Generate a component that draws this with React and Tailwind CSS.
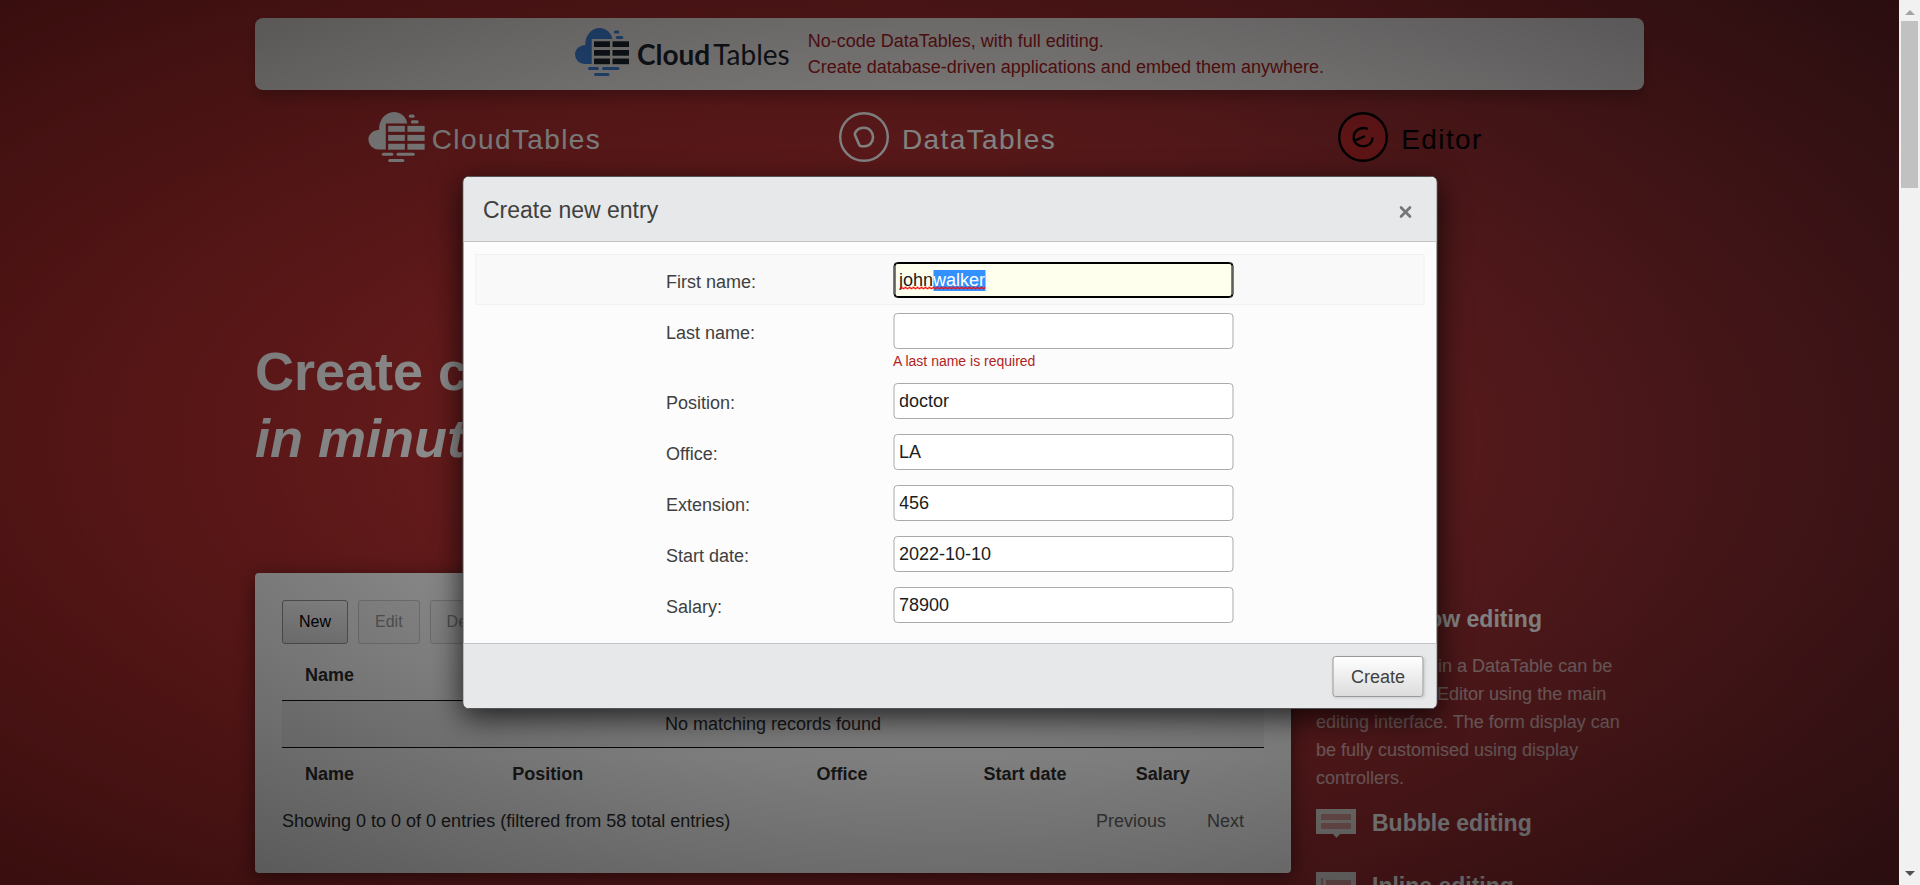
import { useEffect, useRef } from "react";

const COLUMNS = [
  { label: "Name", width: "w-[21.1%]" },
  { label: "Position", width: "w-[31%]" },
  { label: "Office", width: "w-[17%]" },
  { label: "Start date", width: "w-[15.5%]" },
  { label: "Salary", width: "w-[15.4%]" },
];

const FIELDS = [
  { id: "first-name", label: "First name:", value: "johnwalker", active: true },
  { id: "last-name", label: "Last name:", value: "", error: "A last name is required" },
  { id: "position", label: "Position:", value: "doctor" },
  { id: "office", label: "Office:", value: "LA" },
  { id: "extension", label: "Extension:", value: "456" },
  { id: "start-date", label: "Start date:", value: "2022-10-10" },
  { id: "salary", label: "Salary:", value: "78900" },
];

function CloudMark({ className, cloud, cell }) {
  return (
    <svg viewBox="0 0 54 48" className={className} aria-hidden="true">
      <g fill={cloud}>
        <path d="M16.700 36H9.500A9.500 9.500 0 0 1 0 26.500C0 21.500 4 17.600 10.300 17C10 8 16 0 24.500 0C31.500 0 36.500 5 37.300 11H16.700Z" />
        <rect x="38.800" y="2.500" width="5.600" height="3" rx="1.500" />
        <rect x="40.800" y="8" width="7.500" height="3" rx="1.500" />
        <rect x="13" y="39" width="11" height="3" rx="1.500" />
        <rect x="27" y="39" width="17.500" height="3" rx="1.500" />
        <rect x="19" y="45" width="15.500" height="3" rx="1.500" />
      </g>
      <g fill={cell}>
        <rect x="19" y="13.300" width="16" height="5.700" />
        <rect x="37.500" y="13.300" width="16.500" height="5.700" />
        <rect x="19" y="22" width="16" height="5.700" />
        <rect x="37.500" y="22" width="16.500" height="5.700" />
        <rect x="19" y="30.500" width="16" height="5.700" />
        <rect x="37.500" y="30.500" width="16.500" height="5.700" />
      </g>
    </svg>
  );
}

function Banner() {
  return (
    <a
      href="#cloudtables"
      className="flex h-[72px] items-center justify-center gap-[18px] rounded-lg bg-white/95 text-lg leading-[26px] text-[#a8201f] shadow-[0_8px_12px_rgba(0,0,0,0.2)]"
    >
      <span className="flex items-center gap-2">
        <CloudMark className="mb-1 h-12 w-[54px]" cloud="#4389e4" cell="#1b2631" />
        <span className="flex gap-[3px] font-[Lato,sans-serif] text-[28px] text-[#1b2631]">
          <b className="font-bold">Cloud</b>
          <span>Tables</span>
        </span>
      </span>
      <span>
        No-code DataTables, with full editing.
        <br />
        Create database-driven applications and embed them anywhere.
      </span>
    </a>
  );
}

function ProductNav() {
  const item = "flex items-center justify-center pr-1 text-[28px] tracking-wider";
  return (
    <nav className="mt-[22px] grid h-[50px] grid-cols-3">
      <a href="#cloud" className={item + " gap-[7px] text-white"}>
        <CloudMark className="h-[50px] w-[57px]" cloud="#fff" cell="#fff" />
        <span className="pt-[6px]">CloudTables</span>
      </a>
      <a href="#datatables" className={item + " gap-[13px] text-white"}>
        <svg viewBox="0 0 50 50" className="size-[50px]" fill="none" stroke="currentColor" aria-hidden="true">
          <circle cx="25" cy="25" r="23.800" strokeWidth="2.400" />
          <path d="M16.300 20.500C18 17.500 21 15.800 25 15.800C30.500 15.800 34 20 34 25C34 30.500 30.500 34.300 25.500 34.300H22.500Q20.800 34.300 20.200 32.800L16 23Q15.600 21.700 16.300 20.500Z" strokeWidth="2.600" />
        </svg>
        <span className="pt-[6px]">DataTables</span>
      </a>
      <a href="#editor" className={item + " gap-[13px] text-black"}>
        <svg viewBox="0 0 50 50" className="size-[50px]" fill="none" stroke="currentColor" aria-hidden="true">
          <circle cx="25" cy="25" r="23.800" strokeWidth="2.400" fill="#c42a2c" />
          <path d="M29 16.600C22 14.300 15.700 19 15.700 25.500C15.700 31 20 34.300 25 34.300C30.500 34.300 34.200 31 34.500 26.500M17 28.700L26 24.500" strokeWidth="2.400" strokeLinecap="round" />
        </svg>
        <span className="pt-[6px]">Editor</span>
      </a>
    </nav>
  );
}

function EntriesPanel() {
  const tool = "h-11 rounded-[3px] border px-4 text-base";
  return (
    <section className="h-[300px] min-w-0 flex-1 rounded bg-white px-[27px] pt-[27px] text-lg text-[#2c2c2c] shadow-[0_4px_20px_rgba(0,0,0,0.5)]">
      <div className="flex gap-[10px]">
        <button type="button" className={tool + " border-[#999] bg-linear-to-b from-white to-[#e4e4e4] text-black"}>New</button>
        <button type="button" disabled className={tool + " border-[#d0d0d0] bg-[#f9f9f9] text-[#999]"}>Edit</button>
        <button type="button" disabled className={tool + " border-[#d0d0d0] bg-[#f9f9f9] text-[#999]"}>Delete</button>
      </div>
      <table className="w-full table-fixed border-collapse text-left leading-6">
        <thead>
          <tr className="h-[56px] border-b border-[#111]">
            {COLUMNS.map((c) => (
              <th key={c.label} scope="col" className={c.width + " px-[23px] pt-[6px]"}>{c.label}</th>
            ))}
          </tr>
        </thead>
        <tbody>
          <tr className="h-[47px] border-b border-[#111] bg-[#f3f3f3]">
            <td colSpan={5} className="text-center">No matching records found</td>
          </tr>
        </tbody>
        <tfoot>
          <tr className="h-[53px]">
            {COLUMNS.map((c) => (
              <th key={c.label} className="px-[23px]">{c.label}</th>
            ))}
          </tr>
        </tfoot>
      </table>
      <div className="mt-[7px] flex items-center justify-between leading-7">
        <p>Showing 0 to 0 of 0 entries (filtered from 58 total entries)</p>
        <div className="flex gap-[41px] pr-5 text-[#666]">
          <button type="button">Previous</button>
          <button type="button">Next</button>
        </div>
      </div>
    </section>
  );
}

function FeatureIcon({ children }) {
  return (
    <svg viewBox="0 0 40 29" className="h-[29px] w-10 shrink-0" aria-hidden="true">
      {children}
    </svg>
  );
}

function Features() {
  const heading = "flex items-start gap-4 text-[23px] leading-7 font-bold";
  return (
    <aside className="w-[328px] shrink-0 pt-8 text-white">
      <h2 className={heading}>
        <FeatureIcon>
          <rect width="40" height="26" fill="#e5dede" />
          <path d="M5 5h30v6H5zM5 14h30v6H5z" fill="#d99a9a" />
        </FeatureIcon>
        Full row editing
      </h2>
      <p className="mt-[18px] text-lg leading-7 text-white/65">
        The whole row in a DataTable can be edited with the Editor using the main editing interface. The form display
        can be fully customised using display controllers.
      </p>
      <h2 className={heading + " mt-[17px]"}>
        <FeatureIcon>
          <path d="M0 0h40v25H24l-3.500 4L17 25H0z" fill="#e5dede" />
          <path d="M5 5h30v6H5zM5 14h30v6H5z" fill="#d99a9a" />
        </FeatureIcon>
        Bubble editing
      </h2>
      <h2 className={heading + " mt-[34px]"}>
        <FeatureIcon>
          <rect width="40" height="26" fill="#e5dede" />
          <path d="M5 6h2v14H5zM10 8h25v10H10z" fill="#d99a9a" />
        </FeatureIcon>
        Inline editing
      </h2>
    </aside>
  );
}

function FieldRow({ field }) {
  const ref = useRef(null);
  useEffect(() => {
    if (field.active && ref.current) {
      ref.current.focus();
      ref.current.setSelectionRange(4, 10);
    }
  }, [field.active]);
  return (
    <div
      className={
        "flex items-start border pt-[7px] pb-[6px] pl-[190px] " +
        (field.active ? "border-[#f1f1f1] bg-[#f9f9f9]" : "border-transparent")
      }
    >
      <label htmlFor={field.id} className="w-[227px] shrink-0 pt-2 leading-6 text-[#404040]">{field.label}</label>
      <div className="w-[340px]">
        <div className="relative">
          <input
            ref={ref}
            id={field.id}
            type="text"
            defaultValue={field.value}
            spellCheck={false}
            className={
              "block h-9 w-full rounded border px-[5px] text-lg text-[#1c1c1c] outline-none selection:bg-[#3390ff] selection:text-white " +
              (field.active ? "border-black bg-[#ffffee] ring-1 ring-black ring-inset" : "border-[#aaa] bg-white")
            }
          />
          {field.active && (
            <svg className="absolute top-6 left-[6px] h-1 w-[86px]" aria-hidden="true">
              <defs>
                <pattern id="squiggle" width="4" height="4" patternUnits="userSpaceOnUse">
                  <path d="M0 3L2 1L4 3" fill="none" stroke="#f00" strokeWidth="1.200" />
                </pattern>
              </defs>
              <rect width="86" height="4" fill="url(#squiggle)" />
            </svg>
          )}
        </div>
        {field.error && <p className="pt-[5px] text-sm leading-[14px] text-[#b11f1f]">{field.error}</p>}
      </div>
    </div>
  );
}

function EntryDialog() {
  return (
    <form
      role="dialog"
      aria-labelledby="dialog-title"
      className="absolute top-44 left-1/2 w-[975px] -translate-x-1/2 overflow-hidden rounded-md border border-[#555] bg-[#fcfcfc] text-lg shadow-[0_8px_30px_rgba(0,0,0,0.75)]"
    >
      <header className="flex h-[65px] items-center justify-between border-b border-[#c3c3c3] bg-[#e7e8ea] pr-[25px] pl-5">
        <h1 id="dialog-title" className="pt-[3px] text-[23px] text-[#404040]">Create new entry</h1>
        <button type="button" aria-label="Close" className="pt-[6px] text-[#777]">
          <svg viewBox="0 0 12 12" className="size-3" fill="none" stroke="currentColor" strokeWidth="2.800" strokeLinecap="round">
            <path d="M1.500 1.500L10.500 10.500M10.500 1.500L1.500 10.500" />
          </svg>
        </button>
      </header>
      <div className="px-3 pt-3 pb-[13px]">
        {FIELDS.map((f) => (
          <FieldRow key={f.id} field={f} />
        ))}
      </div>
      <footer className="flex h-[65px] items-center justify-end border-t border-[#c3c3c3] bg-[#e7e8ea] pt-px pr-[13px]">
        <button
          type="button"
          className="h-[41px] rounded-[3px] border border-[#999] bg-linear-to-b from-white to-[#dcdcdc] px-[17px] text-[#404040] shadow-[1px_1px_3px_#ccc]"
        >
          Create
        </button>
      </footer>
    </form>
  );
}

function ScrollTrack() {
  return (
    <div className="flex w-[21px] shrink-0 flex-col items-center bg-[#f1f1f1]" aria-hidden="true">
      <div className="flex h-[21px] items-center pt-[3px]">
        <svg viewBox="0 0 10 5" className="h-[5px] w-[10px]" fill="#a3a3a3"><path d="M5 0L10 5H0z" /></svg>
      </div>
      <div className="h-[167px] w-[17px] bg-[#c1c1c1]" />
      <div className="mt-auto flex h-[21px] items-center pb-[3px]">
        <svg viewBox="0 0 10 5" className="h-[5px] w-[10px]" fill="#505050"><path d="M5 5L0 0H10z" /></svg>
      </div>
    </div>
  );
}

export default function App() {
  return (
    <div className="flex h-screen overflow-hidden font-['Liberation_Sans',Arial,sans-serif]">
      <main className="relative min-w-0 flex-1 overflow-hidden bg-linear-to-r from-[#be2f30] via-[#ab2f31] to-[#8c2d33]">
        <div className="mx-auto w-full max-w-[1389px] pt-[18px]">
          <Banner />
          <ProductNav />
          <div className="mt-[176px] text-[54px] leading-[67px] font-bold text-white">
            Create custom editable tables
            <br />
            <em>in minutes</em>
          </div>
          <div className="mt-[101px] flex items-start gap-[25px]">
            <EntriesPanel />
            <Features />
          </div>
        </div>
        <div className="absolute inset-0 bg-[radial-gradient(ellipse_farthest-corner_at_center,rgba(0,0,0,0.3),rgba(0,0,0,0.7))]" />
        <EntryDialog />
      </main>
      <ScrollTrack />
    </div>
  );
}
